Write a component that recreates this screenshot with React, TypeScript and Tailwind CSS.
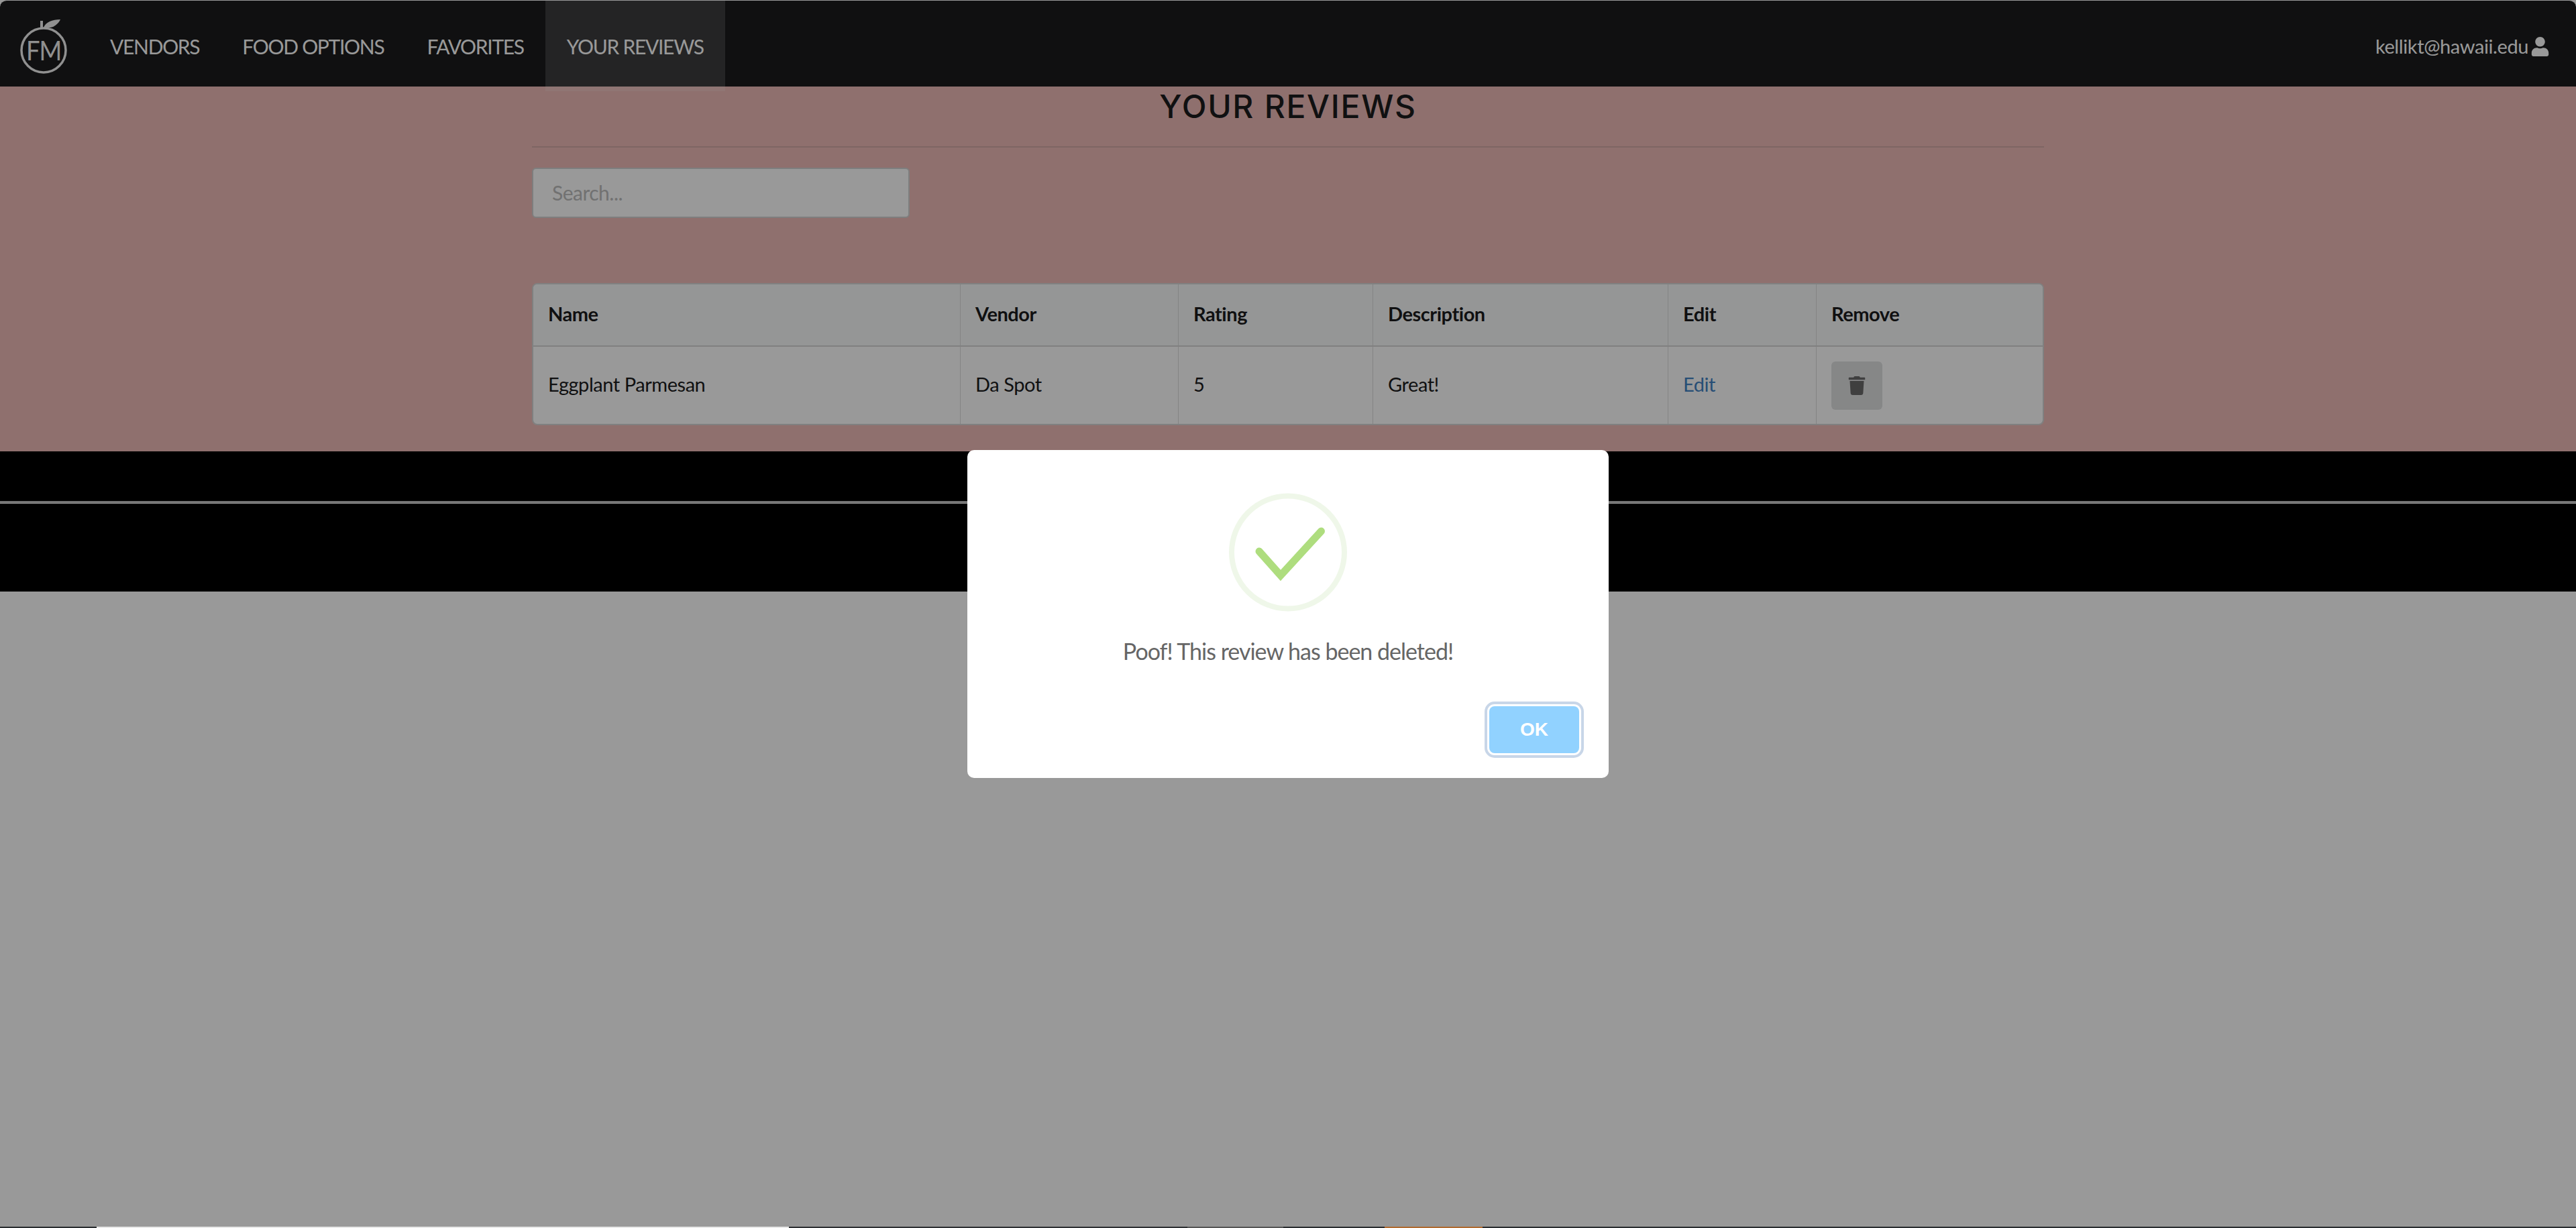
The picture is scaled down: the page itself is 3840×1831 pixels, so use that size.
import { FaTrash, FaUser } from "react-icons/fa";

const columns = [
  { label: "Name", width: "w-[636px]" },
  { label: "Vendor", width: "w-[325px]" },
  { label: "Rating", width: "w-[290px]" },
  { label: "Description", width: "w-[440px]" },
  { label: "Edit", width: "w-[221px]" },
  { label: "Remove", width: "flex-1" },
];

function Logo() {
  return (
    <svg width="76" height="86" viewBox="0 0 76 86" className="ml-[28px] mt-[25px] shrink-0 self-start">
      <circle cx="37" cy="49" r="33" fill="none" stroke="#f0f0f0" strokeWidth="3.5" />
      <rect x="32" y="5" width="4" height="11" fill="#f0f0f0" />
      <path d="M37 15 C40 7 50 3 62 3 C59 10 50 18 37 15 Z" fill="#f0f0f0" />
      <text x="37" y="64" textAnchor="middle" fontFamily="Lato" fontSize="40" textLength="52" lengthAdjust="spacingAndGlyphs" fill="#f0f0f0">FM</text>
    </svg>
  );
}

export default function App() {
  return (
    <div className="relative h-[1831px] w-full overflow-hidden bg-white font-['Lato',sans-serif]">
      {/* nav */}
      <header className="flex h-[129px] items-stretch rounded-t-[10px] border-t border-white bg-[#1b1c1d] text-[30px] tracking-[-1.3px] text-white">
        <Logo />
        <nav className="ml-[28px] flex items-stretch">
          <a className="flex items-center px-[32px] pt-[8px]">VENDORS</a>
          <a className="flex items-center px-[32px] pt-[8px]">FOOD OPTIONS</a>
          <a className="flex items-center px-[32px] pt-[8px]">FAVORITES</a>
          <a className="relative -mb-[7px] flex items-center bg-white/15 px-[32px] pb-[7px] pt-[8px]">YOUR REVIEWS</a>
        </nav>
        <div className="ml-auto flex items-center pr-[39px] pt-[8px] text-[29px] tracking-[-0.4px]">
          kellikt@hawaii.edu
          <FaUser className="ml-[3px] text-[29px]" />
        </div>
      </header>

      {/* page */}
      <main className="h-[544px] bg-[#eebbb7]">
        <div className="mx-auto w-[2254px]">
          <h2 className="h-[91px] border-b-2 border-[#d3a9a5] text-center font-['Inter',sans-serif] text-[48px] leading-[60px] font-medium tracking-[1.7px] text-[#1b1c1d]">
            YOUR REVIEWS
          </h2>
          <div className="mt-[30px] flex h-[75px] w-[563px] items-center rounded-[6px] border-2 border-[#d2d2d2] bg-white px-[28px] text-[30px] tracking-[-0.5px] text-[#bdbdbd]">
            Search...
          </div>
          <div className="mt-[97px] h-[212px] rounded-[8px] border-2 border-[#d5d5d5] bg-white text-[29px] tracking-[-0.45px] text-[#1b1c1d]">
            <div className="flex h-[93px] rounded-t-[6px] border-b-2 border-[#d5d5d5] bg-[#f9fafb] font-bold">
              {columns.map((col, i) => (
                <div key={col.label} className={`${col.width} flex items-center px-[22px] pb-[3px] ${i > 0 ? "border-l border-[#dcdcdc]" : ""}`}>
                  {col.label}
                </div>
              ))}
            </div>
            <div className="flex h-[115px]">
              <div className="flex w-[636px] items-center px-[22px] pb-[3px]">Eggplant Parmesan</div>
              <div className="flex w-[325px] items-center border-l border-[#dcdcdc] px-[22px] pb-[3px]">Da Spot</div>
              <div className="flex w-[290px] items-center border-l border-[#dcdcdc] px-[22px] pb-[3px]">5</div>
              <div className="flex w-[440px] items-center border-l border-[#dcdcdc] px-[22px] pb-[3px]">Great!</div>
              <div className="flex w-[221px] items-center border-l border-[#dcdcdc] px-[22px] pb-[3px] text-[#4183c4]">Edit</div>
              <div className="flex flex-1 items-center border-l border-[#dcdcdc] px-[22px]">
                <button className="flex h-[72px] w-[76px] items-center justify-center rounded-[6px] bg-[#e0e1e2] text-[28px] text-[#6a6a6a]">
                  <FaTrash />
                </button>
              </div>
            </div>
          </div>
        </div>
      </main>

      {/* footer */}
      <footer className="h-[209px] bg-black pt-[74px]">
        <div className="h-[4px] border-b border-white bg-[#c0c0c0]" />
      </footer>

      {/* swal overlay and dialog */}
      <div className="absolute inset-x-0 top-0 h-[1829px] bg-black/40" />
      <div className="absolute left-[1442px] top-[671px] flex h-[489px] w-[956px] flex-col items-center rounded-[10px] bg-white">
        <svg width="176" height="177" viewBox="0 0 176 177" className="mt-[64px] shrink-0">
          <circle cx="88" cy="88.5" r="84" fill="none" stroke="#eff7e9" strokeWidth="8" />
          <path d="M45 87 L77 123 L137.5 57" fill="none" stroke="#aedd7e" strokeWidth="11" strokeLinecap="round" strokeLinejoin="miter" />
        </svg>
        <p className="mt-[37px] text-[34px] leading-[44px] tracking-[-1px] text-[#666]">Poof! This review has been deleted!</p>
        <div className="mt-[60px] flex w-full justify-end pr-[44px]">
          <button className="h-[70px] w-[134px] rounded-[8px] bg-[#91d2ff] font-['Liberation_Sans',sans-serif] text-[28px] font-bold text-white shadow-[0_0_0_3px_#fff,0_0_0_7px_#c8d6e8]">
            OK
          </button>
        </div>
      </div>

      {/* strip of the window behind, left uncovered at the very bottom */}
      <div className="absolute inset-x-0 bottom-0 flex h-[2px]">
        <div className="w-[144px] bg-[#2a2d30]" />
        <div className="w-[1032px] bg-[#e8e8e8]" />
        <div className="w-[594px] bg-[#2e3033]" />
        <div className="w-[143px] bg-[#555]" />
        <div className="w-[151px] bg-[#2a2d30]" />
        <div className="w-[146px] bg-[#b06a2f]" />
        <div className="flex-1 bg-[#2a2d30]" />
      </div>
    </div>
  );
}
